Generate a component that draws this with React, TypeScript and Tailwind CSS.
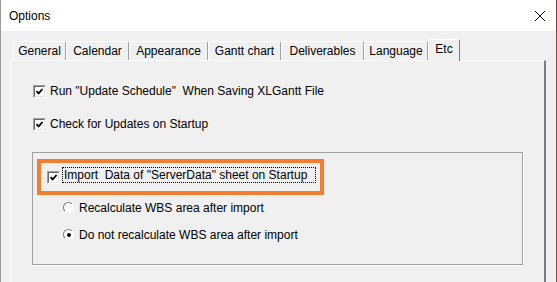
import React from 'react';

const tabs = [
  { label: 'General', w: 'w-[53px]' },
  { label: 'Calendar', w: 'w-[63px]' },
  { label: 'Appearance', w: 'w-[79px]' },
  { label: 'Gantt chart', w: 'w-[73px]' },
  { label: 'Deliverables', w: 'w-[83px]' },
  { label: 'Language', w: 'w-[64px]' },
];

function CheckBox() {
  return (
    <span className="w-[13px] h-[13px] shrink-0 border border-t-[#a0a0a0] border-l-[#a0a0a0] border-r-white border-b-white">
      <span className="block w-full h-full bg-white border border-t-[#696969] border-l-[#696969] border-r-[#e3e3e3] border-b-[#e3e3e3]">
        <svg viewBox="0 0 9 9" className="w-[9px] h-[9px] block">
          <path d="M1.5 4.2 L3.6 6.4 L7.6 2" fill="none" stroke="#000" strokeWidth="1.8" />
        </svg>
      </span>
    </span>
  );
}

function Radio({ checked }: { checked?: boolean }) {
  return (
    <span className="relative w-[11px] h-[11px] shrink-0 rounded-full border border-t-[#7a7a7a] border-l-[#7a7a7a] border-r-white border-b-white bg-white flex items-center justify-center">
      {checked && <span className="w-[4px] h-[4px] rounded-full bg-black" />}
    </span>
  );
}

export default function App() {
  return (
    <div className="w-[557px] h-[282px] overflow-hidden bg-[#f0f0f0] text-[12px] text-black flex flex-col border-l border-[#9a9a9a]" style={{ fontFamily: '"Liberation Sans", Arial, sans-serif' }}>
      {/* Title bar */}
      <div className="h-[31px] shrink-0 bg-white flex items-center justify-between pl-[8px] pr-[10px] border-r border-[#5a4a38]">
        <span className="leading-none">Options</span>
        <svg viewBox="0 0 10 10" className="w-[10px] h-[10px] mr-[1px]">
          <path d="M0 0 L10 10 M10 0 L0 10" stroke="#111" strokeWidth="1" />
        </svg>
      </div>

      {/* Body */}
      <div className="flex-1 flex flex-col pl-[9px] pr-[9px] pt-[8px] border-r border-[#6b5a45]">
        {/* Tab strip */}
        <div className="h-[21px] flex items-end pl-[3px] relative z-10">
          {tabs.map((t) => (
            <div
              key={t.label}
              className={`${t.w} h-[19px] flex items-center justify-center border-t border-l border-white border-r border-r-[#a0a0a0] rounded-t-[2px] leading-none`}
            >
              {t.label}
            </div>
          ))}
          <div className="w-[32px] h-[22px] -mb-[1px] flex items-start justify-center pt-[3px] border-t border-l border-white border-r border-r-[#7c7c7c] bg-[#f0f0f0] rounded-t-[2px] leading-none">
            Etc
          </div>
        </div>

        {/* Panel */}
        <div className="flex-1 w-[536px] border-t border-l border-white border-r-2 border-r-[#7c7c7c] pt-[22px] pl-[21px]">
          <div className="flex flex-col gap-[17px] pl-[1px]">
            <div className="h-[16px] flex items-center gap-[4px]">
              <CheckBox />
              <span className="whitespace-pre">Run "Update Schedule"  When Saving XLGantt File</span>
            </div>
            <div className="h-[16px] flex items-center gap-[4px]">
              <CheckBox />
              <span>Check for Updates on Startup</span>
            </div>
          </div>

          {/* Group box */}
          <div className="mt-[20px] w-[492px] h-[114px] border-r border-b border-white">
            <div className="w-[491px] h-[113px] border border-[#a0a0a0] pt-[6px] pl-[4px]">
              <div className="w-[287px] h-[36px] border-4 border-[#f47d2f] pt-[4px] pl-[6px] flex items-start">
                <div className="flex items-center mt-[4px]">
                  <CheckBox />
                </div>
                <div className="ml-[2px] w-[254px] h-[16px] border border-dotted border-black flex items-center pl-[1px] whitespace-pre">
                  Import  Data of "ServerData" sheet on Startup
                </div>
              </div>

              <div className="flex flex-col gap-[16px] pl-[26px] pt-[7px]">
                <div className="h-[11px] flex items-center gap-[5px]">
                  <Radio />
                  <span>Recalculate WBS area after import</span>
                </div>
                <div className="h-[11px] flex items-center gap-[5px]">
                  <Radio checked />
                  <span>Do not recalculate WBS area after import</span>
                </div>
              </div>
            </div>
          </div>
        </div>
      </div>
    </div>
  );
}
